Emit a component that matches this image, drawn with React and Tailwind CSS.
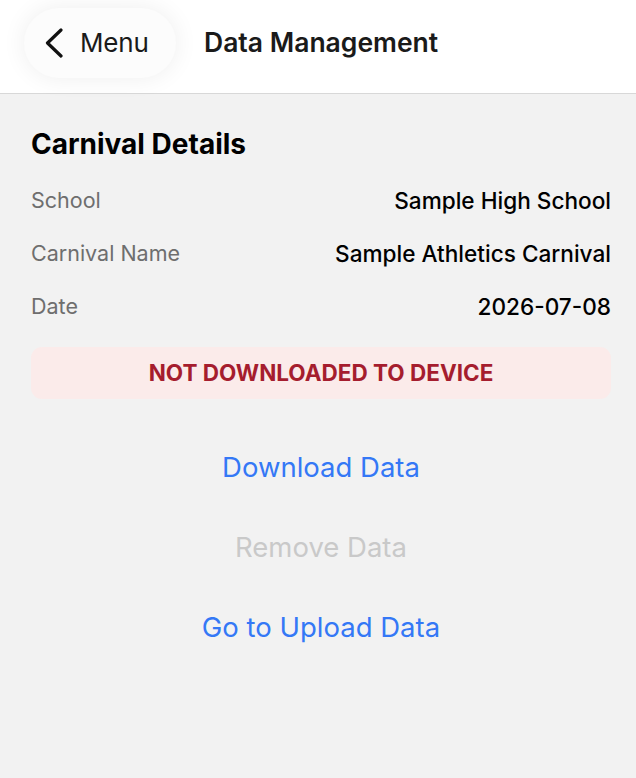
import React from 'react'

const font = { fontFamily: 'Inter, "Noto Sans", sans-serif' }

const details = [
  { label: 'School', value: 'Sample High School' },
  { label: 'Carnival Name', value: 'Sample Athletics Carnival' },
  { label: 'Date', value: '2026-07-08' },
]

const BackChevron = () => (
  <svg width="20" height="30" viewBox="0 0 20 30" fill="none">
    <path d="M17 2 L3.5 15 L17 28" stroke="#111" strokeWidth="3.2" strokeLinecap="round" strokeLinejoin="round" />
  </svg>
)

export default function App() {
  return (
    <div className="w-[636px] h-[778px] bg-[#f2f2f2] flex flex-col" style={font}>
      {/* Nav bar */}
      <header className="h-[94px] bg-white border-b border-[#d8d8d8] flex items-center pl-6 gap-7 shrink-0">
        <button className="h-[70px] w-[152px] rounded-full bg-[#fcfcfc] shadow-[0_0_24px_rgba(0,0,0,0.07)] flex items-center pl-[20px] gap-[16px] -mt-[8px]">
          <BackChevron />
          <span className="text-[26px] text-[#1a1a1a] tracking-[-0.2px]">Menu</span>
        </button>
        <h1 className="text-[26.5px] font-semibold text-[#1a1a1a] -mt-[8px]">Data Management</h1>
      </header>

      {/* Body */}
      <main className="pl-[31px] pr-[25px] pt-[34px] flex flex-col">
        <h2 className="text-[28px] font-bold text-black leading-[32px]">Carnival Details</h2>

        <div className="mt-[14px] flex flex-col">
          {details.map(d => (
            <div key={d.label} className="h-[53px] flex items-center justify-between">
              <span className="text-[21.5px] text-[#6e6e6e]">{d.label}</span>
              <span className="text-[22.6px] font-medium text-black">{d.value}</span>
            </div>
          ))}
        </div>

        <div className="mt-[14px] h-[52px] rounded-[11px] bg-[#fbebea] flex items-center justify-center">
          <span className="text-[22.5px] font-bold text-[#a51d2e]">NOT DOWNLOADED TO DEVICE</span>
        </div>

        <div className="mt-[41px] flex flex-col items-center">
          <button className="h-[56px] text-[27.5px] text-[#3478f6]">Download Data</button>
          <button className="mt-[24px] h-[56px] text-[27.5px] text-[#c9c9c9]">Remove Data</button>
          <button className="mt-[24px] h-[56px] text-[27.5px] text-[#3478f6]">Go to Upload Data</button>
        </div>
      </main>
    </div>
  )
}
